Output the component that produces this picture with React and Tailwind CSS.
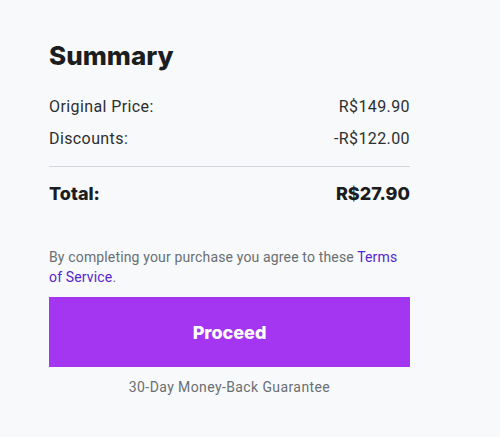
export default function App() {
  return (
    <div
      className="min-h-[437px] bg-[#f7f9fa] px-[49px] pt-[40px]"
      style={{ fontFamily: "Roboto, 'Liberation Sans', sans-serif" }}
    >
      <div className="w-[361px]">
        <h2
          className="text-[26px] leading-[31.2px] font-extrabold text-[#1c1d1f]"
          style={{ fontFamily: "Inter, sans-serif" }}
        >
          Summary
        </h2>

        <div className="mt-[24px] flex flex-col gap-[8px] text-[16px] leading-[24px] tracking-[0.4px] text-[#2d2f31]">
          <div className="flex justify-between">
            <span>Original Price:</span>
            <span>R$149.90</span>
          </div>
          <div className="flex justify-between">
            <span>Discounts:</span>
            <span>-R$122.00</span>
          </div>
        </div>

        <div className="mt-[15px] border-t border-[#d1d7dc]" />

        <div
          className="mt-[15px] flex justify-between text-[18px] leading-[24px] font-extrabold text-[#1c1d1f]"
          style={{ fontFamily: "Inter, sans-serif" }}
        >
          <span>Total:</span>
          <span>R$27.90</span>
        </div>

        <p className="mt-[41px] text-[14px] leading-[20px] tracking-[0.15px] text-[#6a6f73]">
          By completing your purchase you agree to these{" "}
          <a href="#" className="text-[#5624d0]">
            Terms of Service
          </a>
          .
        </p>

        <button
          className="mt-[10px] h-[70px] w-full bg-[#a435f0] text-[18px] font-extrabold text-white"
          style={{ fontFamily: "Inter, sans-serif" }}
        >
          Proceed
        </button>

        <p className="mt-[10px] text-center text-[14px] leading-[20px] tracking-[0.4px] text-[#6a6f73]">
          30-Day Money-Back Guarantee
        </p>
      </div>
    </div>
  );
}
